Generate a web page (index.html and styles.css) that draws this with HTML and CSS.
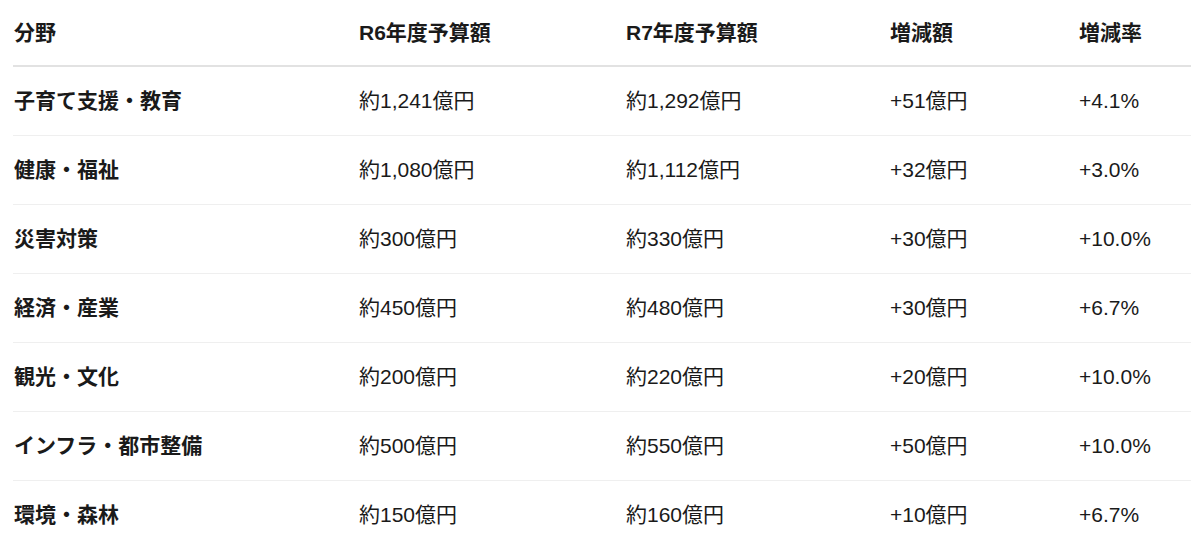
FILE: index.html
```html
<!DOCTYPE html>
<html lang="ja">
<head>
<meta charset="utf-8">
<title>予算比較</title>
<link rel="stylesheet" href="styles.css">
</head>
<body>
<table class="budget">
  <colgroup>
    <col class="c1"><col class="c2"><col class="c3"><col class="c4"><col class="c5">
  </colgroup>
  <thead>
    <tr><th>分野</th><th>R6年度予算額</th><th>R7年度予算額</th><th>増減額</th><th>増減率</th></tr>
  </thead>
  <tbody>
    <tr><td class="name">子育て支援・教育</td><td>約1,241億円</td><td>約1,292億円</td><td>+51億円</td><td>+4.1%</td></tr>
    <tr><td class="name">健康・福祉</td><td>約1,080億円</td><td>約1,112億円</td><td>+32億円</td><td>+3.0%</td></tr>
    <tr><td class="name">災害対策</td><td>約300億円</td><td>約330億円</td><td>+30億円</td><td>+10.0%</td></tr>
    <tr><td class="name">経済・産業</td><td>約450億円</td><td>約480億円</td><td>+30億円</td><td>+6.7%</td></tr>
    <tr><td class="name">観光・文化</td><td>約200億円</td><td>約220億円</td><td>+20億円</td><td>+10.0%</td></tr>
    <tr><td class="name">インフラ・都市整備</td><td>約500億円</td><td>約550億円</td><td>+50億円</td><td>+10.0%</td></tr>
    <tr><td class="name">環境・森林</td><td>約150億円</td><td>約160億円</td><td>+10億円</td><td>+6.7%</td></tr>
  </tbody>
</table>
</body>
</html>
```

FILE: styles.css
```css
html, body {
  margin: 0;
  padding: 0;
  background: #ffffff;
}
body {
  font-family: "Liberation Sans", "Noto Sans CJK JP", sans-serif;
  font-size: 21px;
  color: #1a1a1a;
}
.budget {
  margin-left: 13px;
  width: 1178px;
  border-collapse: collapse;
  table-layout: fixed;
}
.c1 { width: 345px; }
.c2 { width: 267px; }
.c3 { width: 264px; }
.c4 { width: 189px; }
.c5 { width: 113px; }
.budget th,
.budget td {
  text-align: left;
  padding: 0 0 0 1px;
  white-space: nowrap;
  line-height: 24px;
}
.budget th {
  height: 65px;
  font-weight: 700;
  border-bottom: 2px solid #e2e2e2;
}
.budget td {
  height: 68px;
  font-weight: 400;
  border-bottom: 1px solid #efefef;
}
.budget tbody tr:last-child td {
  border-bottom: none;
}
.budget td.name {
  font-weight: 700;
}
```
